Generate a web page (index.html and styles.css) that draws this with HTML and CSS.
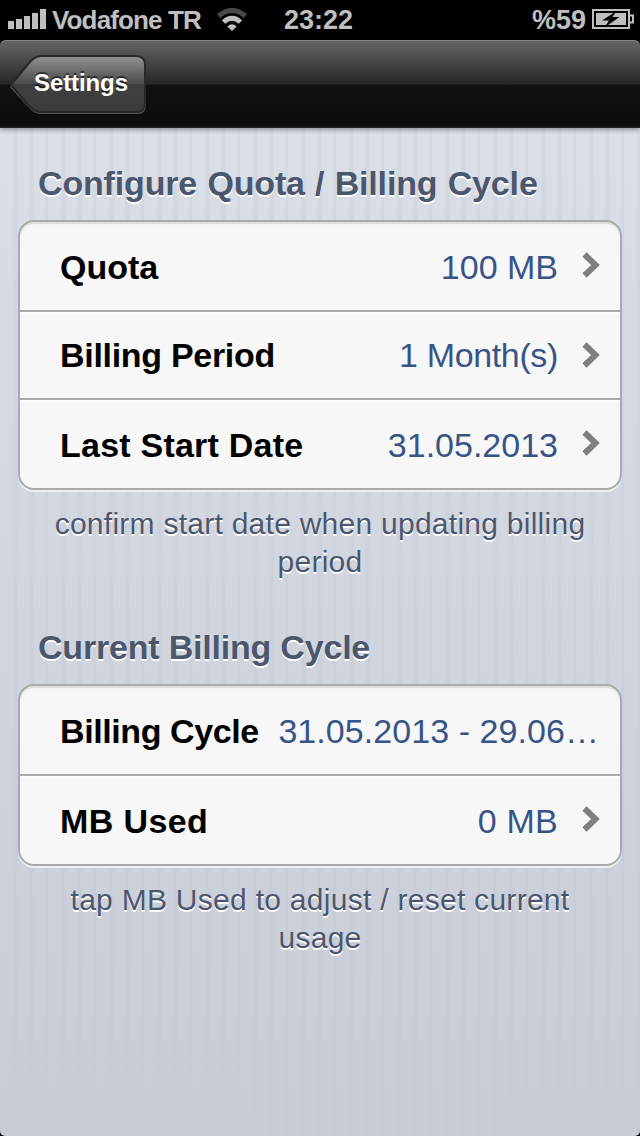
FILE: index.html
```html
<!DOCTYPE html>
<html lang="en">
<head>
<meta charset="utf-8">
<title>Settings</title>
<link rel="stylesheet" href="styles.css">
</head>
<body>
<div class="screen">
  <header class="status">
    <svg class="signal" width="38" height="20" viewBox="0 0 38 20"><path d="M0 12h6v8H0zM8 10h6v10H8zM16 7h6v13h-6zM24 4h6v16h-6zM32 0h6v20h-6z"/></svg>
    <span class="carrier">Vodafone TR</span>
    <svg class="wifi" width="32" height="24" viewBox="0 0 32 24"><path class="wifi-dim" d="M2.500 8Q16-3 29.500 8"/><path class="wifi-lit" d="M7.500 14Q16 6.500 24.500 14"/><path class="wifi-dot" d="M11.300 18.500Q16 14 20.700 18.500L16 23z"/></svg>
    <span class="clock">23:22</span>
    <span class="percent">%59</span>
    <svg class="battery" width="42" height="20" viewBox="0 0 42 20"><path class="battery-shell" d="M1 1h36v18H1zM38 6.500h3v7h-3"/><path class="battery-fill" d="M4 4h30v12H4z"/><path class="battery-bolt" d="M24.500 2L10 11.500h7L12.500 18.500L27.500 8h-7z"/></svg>
  </header>
  <nav class="navbar">
    <button class="back">
      <svg class="back-shape" width="138" height="62" viewBox="0 0 138 62">
        <defs><linearGradient id="face" x1="0" y1="0" x2="0" y2="1"><stop offset="0" stop-color="#929292"/><stop offset=".49" stop-color="#4c4c4c"/><stop offset=".5" stop-color="#404040"/><stop offset="1" stop-color="#3b3b3b"/></linearGradient></defs>
        <path class="back-glow" d="M0 33L19 10Q25 3 31 3H127Q136 3 136 12V51Q136 60 127 60H31Q25 60 19 54Z"/>
        <path class="back-face" d="M1 31L19 9Q25 2 31 2H126Q135 2 135 11V49Q135 58 126 58H31Q25 58 19 52Z"/>
      </svg>
      <span class="back-label">Settings</span>
    </button>
  </nav>
  <main class="content">
    <h2 class="heading heading-configure">Configure Quota / Billing Cycle</h2>
    <section class="group">
      <div class="row"><span class="label label-quota">Quota</span><span class="value value-quota">100 MB</span><svg class="chevron" width="18" height="26" viewBox="0 0 18 26"><path d="M2.500 2.500L13.500 13L2.500 23.500"/></svg></div>
      <div class="row row-middle"><span class="label label-period">Billing Period</span><span class="value value-period">1 Month(s)</span><svg class="chevron" width="18" height="26" viewBox="0 0 18 26"><path d="M2.500 2.500L13.500 13L2.500 23.500"/></svg></div>
      <div class="row"><span class="label label-start">Last Start Date</span><span class="value value-start">31.05.2013</span><svg class="chevron" width="18" height="26" viewBox="0 0 18 26"><path d="M2.500 2.500L13.500 13L2.500 23.500"/></svg></div>
    </section>
    <p class="note note-confirm">confirm start date when updating billing<br>period</p>
    <h2 class="heading heading-current">Current Billing Cycle</h2>
    <section class="group">
      <div class="row"><span class="label label-cycle">Billing Cycle</span><span class="value value-cycle">31.05.2013 - 29.06…</span></div>
      <div class="row"><span class="label label-used">MB Used</span><span class="value value-used">0 MB</span><svg class="chevron" width="18" height="26" viewBox="0 0 18 26"><path d="M2.500 2.500L13.500 13L2.500 23.500"/></svg></div>
    </section>
    <p class="note note-usage">tap MB Used to adjust / reset current<br>usage</p>
  </main>
</div>
</body>
</html>
```
FILE: styles.css
```css
* { box-sizing: border-box; }
body { margin: 0; background: #000; font-family: "Liberation Sans", Arial, sans-serif; }
svg { display: block; flex: none; }
.screen { width: 640px; height: 1136px; overflow: hidden; display: flex; flex-direction: column; border-radius: 0 0 5px 5px; }

.status { height: 40px; flex: none; display: flex; align-items: center; padding: 0 6px 0 8px; background: #000; color: #bfbfbf; font-size: 27px; font-weight: bold; white-space: nowrap; }
.signal { fill: #bfbfbf; margin-top: -2px; }
.carrier { width: 150px; margin-left: 6px; font-size: 26px; letter-spacing: -.85px; }
.wifi { margin-left: 14px; }
.wifi path { fill: none; stroke-width: 5; }
.wifi .wifi-dim { stroke: #484848; }
.wifi .wifi-lit { stroke: #bfbfbf; }
.wifi .wifi-dot { fill: #bfbfbf; }
.clock { margin-left: 36px; }
.percent { margin-left: auto; }
.battery { margin: -2px 0 0 6px; }
.battery-shell { fill: none; stroke: #bfbfbf; stroke-width: 2; }
.battery-fill { fill: #bfbfbf; }
.battery-bolt { fill: #000; }

.navbar { height: 88px; flex: none; padding: 14px 0 0 10px; border-radius: 6px 6px 0 0; background: linear-gradient(#666, #272727 50%, #111 51%, #0c0c0c 97%, #292929); box-shadow: inset 0 1px #858585, 0 2px 4px #0005; z-index: 1; }
.back { display: grid; width: 138px; height: 62px; padding: 0; border: 0; background: none; color: #fff; font: bold 24px "Liberation Sans", Arial, sans-serif; }
.back-shape, .back-label { grid-area: 1 / 1; }
.back-glow { fill: #555; }
.back-face { fill: url(#face); stroke: #282828; stroke-width: 2; }
.back-label { text-align: left; padding: 15px 0 0 24px; letter-spacing: -.1px; text-shadow: 0 -2px #0008; }

.content { flex: 1; padding: 35px 18px 0; background: repeating-linear-gradient(90deg, transparent 0 13px, #a5afc31c 13px 18px, transparent 18px 29px, #a5afc31c 29px 34px, transparent 34px 45px, #a5afc31c 45px 48px), linear-gradient(#d9dee7, #c8ccd6); }
.heading { margin: 0 0 17px; padding-left: 20px; height: 40px; font-size: 34px; line-height: 40px; color: #4c566c; text-shadow: 0 2px #fff; white-space: nowrap; }
.heading-configure { letter-spacing: -.16px; word-spacing: 1px; }
.group { width: 604px; border: 2px solid #aaa; border-radius: 16px; background: #f7f7f7; overflow: hidden; box-shadow: 0 2px #eef0f4, inset 0 2px 1px #ddd; }
.row { height: 88px; display: flex; align-items: center; padding: 1px 20px 0 40px; font-size: 34px; line-height: 40px; white-space: nowrap; }
.row + .row { height: 90px; border-top: 2px solid #aaa; box-shadow: inset 0 2px #fff; }
.row + .row-middle { height: 88px; padding-top: 0; }
.label { font-weight: bold; }
.label-period { letter-spacing: -.3px; }
.label-start { letter-spacing: .23px; }
.label-cycle { letter-spacing: -.4px; }
.label-used { letter-spacing: .4px; }
.value { margin-left: auto; color: #385487; }
.value-period { letter-spacing: -.35px; }
.value-cycle { letter-spacing: .06px; margin-right: 1px; }
.value-used { letter-spacing: .2px; }
.chevron { margin: -3px 0 0 24px; fill: none; stroke: #7f7f7f; stroke-width: 6; }
.row-middle .chevron { margin-top: 0; }
.note { height: 76px; margin: 15px 0 0; text-align: center; font-size: 30px; line-height: 38px; color: #4c566c; text-shadow: 0 2px #fff; white-space: nowrap; }
.note-confirm { letter-spacing: .26px; }
.note-usage { letter-spacing: .28px; }
.heading-current { margin-top: 46px; letter-spacing: -.2px; }
```
